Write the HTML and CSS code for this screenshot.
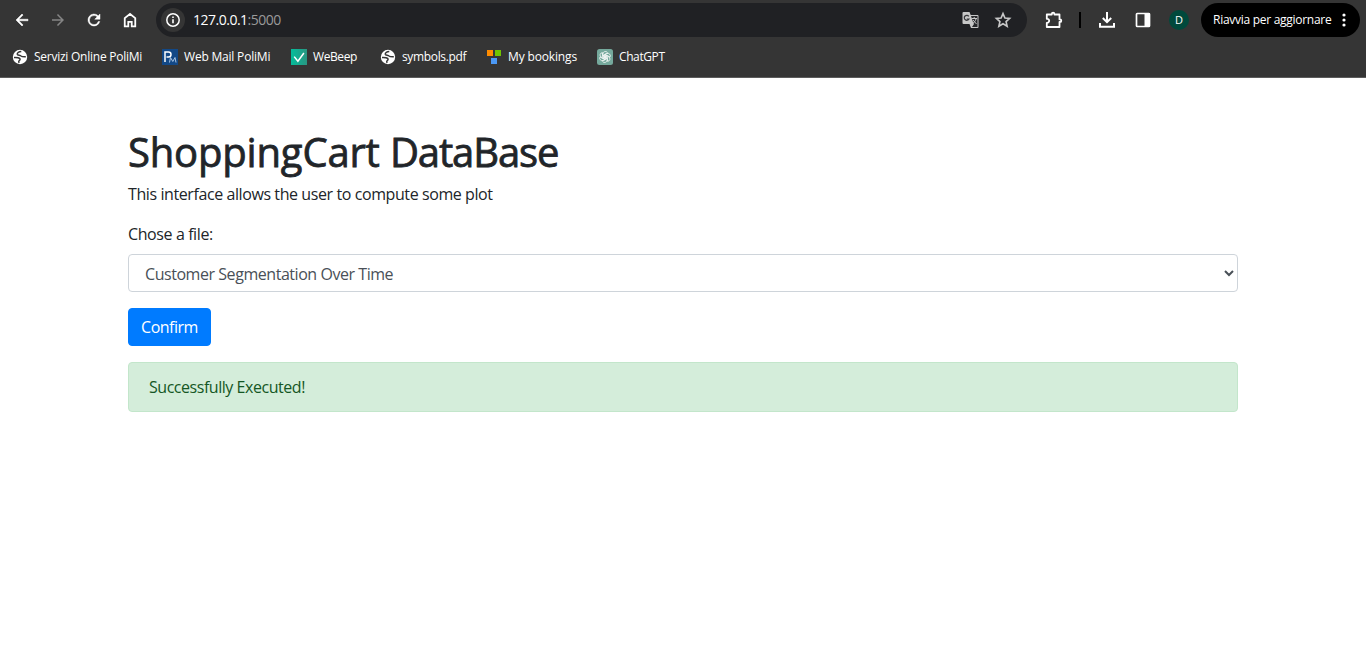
FILE: index.html
```html
<!DOCTYPE html>
<html lang="en">
<head>
<meta charset="utf-8">
<title>ShoppingCart DataBase</title>
<link rel="stylesheet" href="styles.css">
</head>
<body>
<header class="browser">
  <div class="toolbar">
    <nav class="nav">
      <svg class="ic" viewBox="0 0 24 24"><path d="M20 11H7.800l5.600-5.600L12 4l-8 8 8 8 1.400-1.400L7.800 13H20z" stroke="#fff" stroke-width=".7"/></svg>
      <svg class="ic dim" viewBox="0 0 24 24"><path d="M4 11h12.200l-5.600-5.600L12 4l8 8-8 8-1.400-1.400 5.600-5.600H4z"/></svg>
      <svg class="ic" viewBox="0 0 24 24"><path d="M17.650 6.350A8 8 0 1 0 19.730 14h-2.080A6 6 0 1 1 12 6c1.660 0 3.140.690 4.220 1.780L13 11h7V4z" stroke="#fff" stroke-width=".6"/></svg>
      <svg class="ic" viewBox="0 0 24 24"><path d="M5 20.500V9.500L12 4l7 5.500v11h-4.700v-6H9.700v6z" fill="none" stroke="#fff" stroke-width="2.400"/></svg>
    </nav>
    <div class="omnibox">
      <span class="info"><svg viewBox="0 0 16 16"><circle cx="8" cy="8" r="6.200" fill="none" stroke="#fff" stroke-width="1.500"/><path d="M7.200 7.200h1.600v4H7.200zM7.200 4.500h1.600v1.600H7.200z" fill="#fff"/></svg></span>
      <span class="url">127.0.0.1<span class="port">:5000</span></span>
      <svg class="translate" viewBox="0 0 18 18"><path d="M1.500 1h6l1.200 3H15.500a1 1 0 0 1 1 1v11a1 1 0 0 1-1 1H9l-1.500-4h-6a1 1 0 0 1-1-1V2a1 1 0 0 1 1-1z" fill="#c7c7c7"/><path d="M9 5h6.500v11H10l2-3-1-2z" fill="#28292c"/><path d="M6.800 5.300A2.500 2.500 0 1 0 7 8H4.800" fill="none" stroke="#37383b" stroke-width="1.200"/><path d="M9.500 7.500h5.500M12.200 6v1.500M14 8c-.5 2-2 3.700-3.500 4.500M11 9l3.500 4" fill="none" stroke="#c7c7c7"/></svg>
      <svg class="star" viewBox="0 0 24 24"><path d="M12 3.500l2.600 5.800 6.200.6-4.700 4.200 1.400 6.200L12 17.100l-5.500 3.200 1.400-6.200-4.700-4.200 6.200-.6z" fill="none" stroke="#c7c7c7" stroke-width="2.200"/></svg>
    </div>
    <svg class="puzzle" viewBox="0 0 18 18"><path d="M1.800 3.500h5V3a1.300 1.300 0 0 1 2.600 0v.5h5.100v4.900h.5a1.300 1.300 0 0 1 0 2.600h-.5v5H1.800v-4.200h.4a2 2 0 0 0 0-4h-.4z" fill="none" stroke="#fff" stroke-width="1.800" stroke-linejoin="round"/></svg>
    <span class="separator"></span>
    <svg class="download" viewBox="0 0 18 18"><path d="M9 1v10M4.800 7L9 11.200 13.200 7M2 12v3.800h14V12" fill="none" stroke="#fff" stroke-width="2"/></svg>
    <svg class="panel" viewBox="0 0 16 16"><rect x="1.500" y="1.500" width="13" height="13" rx=".7" fill="none" stroke="#fff" stroke-width="1.700"/><path d="M9.500 1H15v14H9.500z" fill="#fff"/></svg>
    <span class="avatar">D</span>
    <div class="update"><span class="update-text">Riavvia per aggiornare</span><svg viewBox="0 0 4 16"><circle cx="2" cy="3" r="1.600"/><circle cx="2" cy="8" r="1.600"/><circle cx="2" cy="13" r="1.600"/></svg></div>
  </div>
  <nav class="bookmarks">
    <a class="bookmark b1"><svg viewBox="0 0 16 16"><circle cx="8" cy="8" r="7.200" fill="#fff"/><path d="M9.300 2.500C7 2.700 5 3.500 5.300 5.200c.3 1.200 2.900.7 3.700 1.700.7.800 1.900.9 4.800.8M2 8.500c2 .1 4.700 0 5.600.9.800.8.500 1.700-.4 2.300-.7.500-.5 1.400-.2 2.200" fill="none" stroke="#353535" stroke-width="1.500"/></svg><span>Servizi Online PoliMi</span></a>
    <a class="bookmark b2"><svg viewBox="0 0 16 16"><rect width="16" height="16" fill="#124886"/><path d="M3 13V3h3.500a2.500 2.500 0 0 1 0 5H4.500" fill="none" stroke="#fff" stroke-width="1.500"/><path d="M7.500 13.500l1-5 2.300 4 2.200-4 1 5" fill="none" stroke="#a9c5e4"/></svg><span>Web Mail PoliMi</span></a>
    <a class="bookmark b3"><svg viewBox="0 0 16 16"><defs><linearGradient id="teal"><stop stop-color="#04bd9b"/><stop offset="1" stop-color="#2a9682"/></linearGradient></defs><rect width="16" height="16" fill="url(#teal)"/><path d="M3.200 7.600l3.700 4.600 6-8.200" fill="none" stroke="#fff" stroke-width="1.500"/></svg><span>WeBeep</span></a>
    <a class="bookmark b4"><svg viewBox="0 0 16 16"><circle cx="8" cy="8" r="7.200" fill="#fff"/><path d="M9.300 2.500C7 2.700 5 3.500 5.300 5.200c.3 1.200 2.900.7 3.700 1.700.7.800 1.900.9 4.800.8M2 8.500c2 .1 4.700 0 5.600.9.800.8.500 1.700-.4 2.300-.7.500-.5 1.400-.2 2.200" fill="none" stroke="#353535" stroke-width="1.500"/></svg><span>symbols.pdf</span></a>
    <a class="bookmark b5"><svg viewBox="0 0 16 16"><path d="M1 1h6v6H1z" fill="#ff8c00"/><path d="M9 1h6v6H9z" fill="#70c400"/><path d="M5 9h6v6H5z" fill="#4b98f5"/></svg><span>My bookings</span></a>
    <a class="bookmark b6"><svg viewBox="0 0 16 16"><rect width="16" height="16" rx="2.500" fill="#75a99c"/><g fill="none" stroke="#fff" stroke-width=".7"><path id="petal" d="M6 9.100V4.800a2.400 2.400 0 0 1 4.500-1.100L7.200 5.700v3.500"/><use href="#petal" transform="rotate(60 8 8)"/><use href="#petal" transform="rotate(120 8 8)"/><use href="#petal" transform="rotate(180 8 8)"/><use href="#petal" transform="rotate(240 8 8)"/><use href="#petal" transform="rotate(300 8 8)"/></g></svg><span>ChatGPT</span></a>
  </nav>
</header>
<main class="container">
  <h1 class="title">ShoppingCart <span class="title-end">DataBase</span></h1>
  <p class="intro">This interface allows the user to compute some plot</p>
  <form class="form">
    <label class="label" for="plot">Chose a file:</label>
    <select class="select" id="plot"><option>Customer Segmentation Over Time</option></select>
    <button class="confirm" type="button">Confirm</button>
  </form>
  <div class="alert"><span>Successfully Executed!</span></div>
</main>
</body>
</html>
```
FILE: styles.css
```css
* { box-sizing: border-box; }
body {
  margin: 0;
  background: #fff;
  color: #212529;
  font: 16px/24px "Segoe UI", "Open Sans", "Noto Sans", sans-serif;
}
svg { display: block; flex: none; }
.browser {
  height: 78px;
  background: #353535;
  border-bottom: 1px solid #5c5c5c;
  color: #fff;
}
.toolbar { display: flex; align-items: center; height: 40px; padding-left: 13px; }
.toolbar > * { flex: none; }
.nav { display: flex; gap: 18px; width: 143px; }
.ic { width: 18px; height: 18px; fill: #fff; }
.dim { fill: #858585; }
.omnibox {
  display: flex;
  align-items: center;
  width: 871px;
  height: 34px;
  padding-left: 5px;
  border-radius: 17px;
  background: #202124;
}
.info {
  display: grid;
  place-items: center;
  width: 24px;
  height: 24px;
  border-radius: 50%;
  background: #353535;
}
.info svg { width: 16px; height: 16px; }
.url { flex: 1; margin-left: 8px; font-size: 14px; letter-spacing: -0.5px; }
.port { color: #9a9a9a; }
.translate { width: 18px; height: 18px; margin-right: 14px; }
.star { width: 18px; height: 18px; margin-right: 15px; }
.puzzle { width: 18px; height: 18px; margin-left: 18px; }
.separator { width: 2px; height: 16px; margin-left: 16px; background: #000; }
.download { width: 18px; height: 18px; margin-left: 17px; }
.panel { width: 16px; height: 16px; margin-left: 19px; }
.avatar {
  width: 20px;
  height: 20px;
  margin-left: 18px;
  border-radius: 50%;
  background: #00493c;
  font-size: 11px;
  line-height: 20px;
  text-align: center;
}
.update {
  display: flex;
  align-items: center;
  justify-content: space-between;
  width: 159px;
  height: 34px;
  margin-left: 12px;
  padding: 0 14px 0 12px;
  border-radius: 17px;
  background: #000;
  font-size: 12px;
  white-space: nowrap;
}
.update-text { letter-spacing: -0.28px; }
.update svg { width: 4px; height: 16px; fill: #fff; }
.bookmarks { display: flex; padding: 8px 0 0 12px; font-size: 12px; line-height: 18px; }
.bookmark { display: flex; align-items: center; gap: 6px; white-space: nowrap; letter-spacing: -0.25px; }
.bookmark svg { width: 16px; height: 16px; }
.b1 { width: 150px; }
.b2 { width: 129px; letter-spacing: -0.2px; }
.b3 { width: 89px; letter-spacing: -0.4px; }
.b4 { width: 106px; letter-spacing: -0.35px; }
.b5 { width: 111px; letter-spacing: -0.15px; }
.b6 { letter-spacing: -0.4px; }
.container { width: 1110px; margin: 50px auto 0; }
.title {
  margin: 0 0 6px;
  font-size: 40px;
  font-weight: 500;
  line-height: 48px;
  letter-spacing: -0.18px;
  -webkit-text-stroke: 0.8px #212529;
}
.title-end { letter-spacing: -1.1px; }
.intro { margin: 0 0 16px; letter-spacing: -0.41px; }
.form { display: flex; flex-direction: column; align-items: flex-start; }
.label { margin-bottom: 8px; letter-spacing: -0.4px; }
.select {
  width: 100%;
  height: 38px;
  padding: 7px 12px 5px;
  border: 1px solid #ced4da;
  border-radius: 4px;
  background: #fff;
  color: #495057;
  font: inherit;
  letter-spacing: -0.45px;
}
.confirm {
  width: 83px;
  height: 38px;
  margin-top: 16px;
  padding: 6px 12px;
  border: 1px solid #007bff;
  border-radius: 4px;
  background: #007bff;
  color: #fff;
  font: inherit;
  letter-spacing: -0.5px;
}
.alert {
  margin-top: 16px;
  padding: 12px 20px;
  border: 1px solid #c3e6cb;
  border-radius: 4px;
  background: #d4edda;
  color: #155724;
  letter-spacing: -0.46px;
}
```
